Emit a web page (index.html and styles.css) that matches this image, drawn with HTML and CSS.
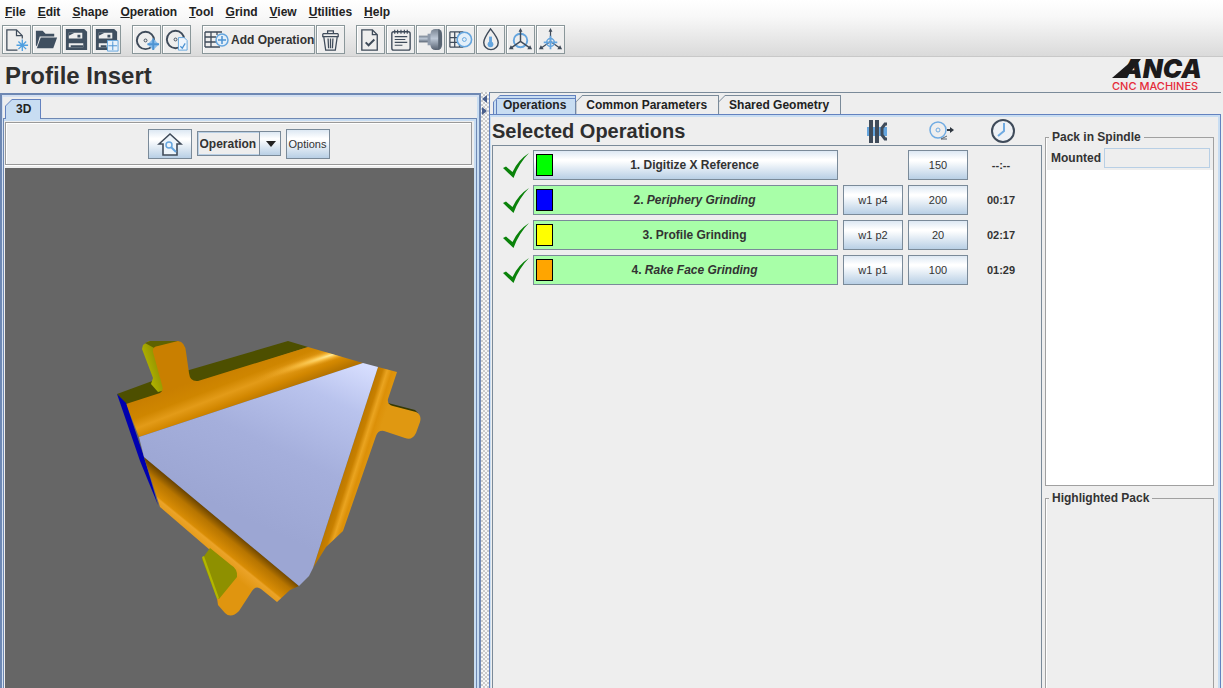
FILE: index.html
```html
<!DOCTYPE html>
<html lang="en">
<head>
<meta charset="utf-8">
<title>Profile Insert</title>
<link rel="stylesheet" href="styles.css">
</head>
<body>
<svg class="defs" width="0" height="0" aria-hidden="true">
  <symbol id="tick" viewBox="0 0 26 27"><path d="M0 16L3 14.500L9.500 20Q15 8 26 1Q16 11 10.500 26Z" fill="#0a820a"/></symbol>
</svg>

<header class="top">
  <nav class="menu">
    <a href="#"><u>F</u>ile</a><a href="#"><u>E</u>dit</a><a href="#"><u>S</u>hape</a><a href="#"><u>O</u>peration</a><a href="#"><u>T</u>ool</a><a href="#"><u>G</u>rind</a><a href="#"><u>V</u>iew</a><a href="#"><u>U</u>tilities</a><a href="#"><u>H</u>elp</a>
  </nav>
  <div class="toolbar">
    <div class="group">
      <button class="tool" aria-label="New"><svg viewBox="0 0 28 28"><path d="M20 13V10L14 4H4V25H15M14 4V10H20" fill="none" stroke="#3f4b5a" stroke-width="1.300"/><path d="M20 14V26M14 20H26M16 16L24 24M24 16L16 24" stroke="#4f9fe0" stroke-width="1.400"/></svg></button>
      <button class="tool" aria-label="Open"><svg viewBox="0 0 28 28"><path d="M3 20V5H10L13 8H22V11H7L4 21Z" fill="#3f4f60"/><path d="M8 12H25L21 23H4Z" fill="#3f4f60"/></svg></button>
      <button class="tool" aria-label="Save"><svg viewBox="0 0 28 28"><path d="M3 3H22L25 6V25H3Z" fill="#3f4f60"/><path d="M6 7H20V13H6ZM6 18H21V22H6Z" fill="#eee"/><path d="M6 7H12L6 10ZM15 9H18V12H15ZM8 20H21V22H8Z" fill="#3f4f60"/></svg></button>
      <button class="tool" aria-label="Save as"><svg viewBox="0 0 28 28"><path d="M3 3H22L25 6V25H3Z" fill="#3f4f60"/><path d="M6 7H20V13H6ZM6 18H16V22H6Z" fill="#eee"/><path d="M6 7H12L6 10ZM15 9H18V12H15ZM8 20H14V22H8Z" fill="#3f4f60"/><path d="M15 15H26V26H15Z" fill="#e8f1fa" stroke="#65a5de"/><path d="M20.500 16V25M16 20.500H25" stroke="#4c93d2"/></svg></button>
    </div>
    <div class="group">
      <button class="tool" aria-label="Add wheel"><svg viewBox="0 0 28 28"><circle cx="13" cy="15" r="9" fill="none" stroke="#3f4b5a" stroke-width="2"/><circle cx="13" cy="15" r="1.500" fill="none" stroke="#3f4b5a"/><path d="M21 13L24 16L27 19L24 22L21 25L18 22L15 19L18 16Z" fill="#8bbdea"/><path d="M21 13V25M15 19H27" stroke="#4f94d3" stroke-width="2"/></svg></button>
      <button class="tool" aria-label="Wheel file"><svg viewBox="0 0 28 28"><circle cx="13" cy="14" r="9" fill="none" stroke="#3f4b5a" stroke-width="2"/><circle cx="13" cy="14" r="1.500" fill="none" stroke="#3f4b5a"/><path d="M16 12H22L25 15V25H16Z" fill="#eef5fc" stroke="#65a5de"/><path d="M18 21L20 23L23 18" fill="none" stroke="#4c93d2" stroke-width="1.300"/></svg></button>
    </div>
    <div class="group">
      <button class="tool wide"><svg class="wide-icon" viewBox="0 0 26 20"><path d="M2 2H19M2 7H13M2 12H13M2 17H17M2 2V17M8 2V17M14 2V5" fill="none" stroke="#3f4b5a" stroke-width="1.300"/><circle cx="19" cy="10" r="6" fill="#e3eff9" stroke="#65a5de" stroke-width="1.500"/><path d="M19 6V14M15 10H23" stroke="#4c93d2" stroke-width="1.500"/></svg>Add Operation</button>
      <button class="tool" aria-label="Delete"><svg viewBox="0 0 28 28"><path d="M6 8H22M11 8V5H17V8M7 11H21L19 25H9ZM6 8V11H22V8M11.500 13L12 23M16.500 13L16 23M14 13V23" fill="none" stroke="#3f4b5a" stroke-width="1.300"/></svg></button>
    </div>
    <div class="group">
      <button class="tool" aria-label="Check"><svg viewBox="0 0 28 28"><path d="M5 4H16L21 9V25H5ZM16 4V9H21" fill="none" stroke="#3f4b5a" stroke-width="1.400"/><path d="M9 17L12 20L18 14" fill="none" stroke="#3f4b5a" stroke-width="2"/></svg></button>
      <button class="tool" aria-label="Notes"><svg viewBox="0 0 28 28"><rect x="5" y="6" width="19" height="19" rx="2" fill="none" stroke="#3f4b5a" stroke-width="1.400"/><path d="M8 4V8M11 4V8M14.500 4V8M18 4V8M21 4V8M8 11H21M8 14H19M8 17H21M8 20H16" stroke="#3f4b5a" stroke-width="1.200"/></svg></button>
      <button class="tool" aria-label="Wheel pack"><svg viewBox="0 0 28 28"><defs><linearGradient id="metal" x1="0" y1="0" x2="0" y2="1"><stop offset="0" stop-color="#788391"/><stop offset=".45" stop-color="#bdc8d6"/><stop offset="1" stop-color="#566170"/></linearGradient></defs><path d="M2 10H13V17H2Z" fill="url(#metal)"/><path d="M11 8H16V20H11Z" fill="#8e9aab"/><rect x="14" y="3" width="12" height="22" rx="5" fill="url(#metal)"/><path d="M22 3Q26 4 26 10V19Q25 24 22 25Z" fill="#596573"/></svg></button>
      <button class="tool" aria-label="Wheel grid"><svg viewBox="0 0 28 28"><path d="M3 6H17M3 12H11M3 17H11M3 22H17M3 6V22M8 6V22M13 6V22" fill="none" stroke="#3f4b5a" stroke-width="1.300"/><circle cx="18" cy="14" r="7.500" fill="#e3eff9" stroke="#65a5de" stroke-width="1.700"/><circle cx="18" cy="14" r="2" fill="none" stroke="#65a5de"/></svg></button>
      <button class="tool" aria-label="Coolant"><svg viewBox="0 0 28 28"><path d="M14 3Q7 13 7 17A7.500 7.500 0 0 0 22 17Q22 13 14 3Z" fill="none" stroke="#3f4b5a" stroke-width="1.500"/><path d="M14 11V19" stroke="#65a5de" stroke-width="3"/><circle cx="14" cy="19" r="3" fill="#65a5de"/></svg></button>
      <button class="tool" aria-label="Rotate axes"><svg viewBox="0 0 28 28"><circle cx="14" cy="15" r="7" fill="none" stroke="#65a5de" stroke-width="2"/><path d="M14 5V16L4 23M14 16L24 23" fill="none" stroke="#3f4b5a" stroke-width="1.500"/><path d="M14 2L16 6H12ZM2 24L4 20L7 24ZM26 24L24 20L21 24Z" fill="#3f4b5a"/></svg></button>
      <button class="tool" aria-label="Move axes"><svg viewBox="0 0 28 28"><path d="M14 5V16L4 23M14 16L24 23" fill="none" stroke="#3f4b5a" stroke-width="1.300"/><path d="M14 2L16 6H12ZM2 24L4 20L7 24ZM26 24L24 20L21 24Z" fill="#3f4b5a"/><circle cx="14" cy="17" r="4" fill="none" stroke="#65a5de" stroke-width="1.500"/><path d="M14 10V24M7 17H21" stroke="#65a5de" stroke-width="1.800"/></svg></button>
    </div>
  </div>
</header>

<div class="titlebar">
  <h1>Profile Insert</h1>
  <svg class="logo" viewBox="0 0 92 34" role="img" aria-label="ANCA CNC Machines">
    <path d="M0 21L22 2H29L14 21Z" fill="#1c1a1b"/>
    <text class="logo-name" x="10" y="21">ANCA</text>
    <text class="logo-sub" x="0" y="33">CNC MACHINES</text>
  </svg>
</div>

<main class="main">
  <section class="view">
    <div class="tabs view-tabs"><button class="tab on view-tab"><span>3D</span></button></div>
    <div class="view-body">
      <div class="view-tools">
        <button class="metal home" aria-label="Home view"><svg viewBox="0 0 26 26"><path d="M2 13L13 3L24 13H20V24H6V13Z" fill="#eef5fb" stroke="#3f4b5a" stroke-width="1.600"/><circle cx="12" cy="14" r="3" fill="none" stroke="#65a5de" stroke-width="1.500"/><path d="M14 16L19 21" stroke="#65a5de" stroke-width="2"/></svg></button>
        <span class="combo"><select aria-label="Colour by"><option>Operation</option></select></span>
        <button class="metal options">Options</button>
      </div>
      <div class="canvas">
        <svg viewBox="5 168 469 520" preserveAspectRatio="xMinYMin meet" role="img" aria-label="3D model of the insert">
          <defs>
            <linearGradient id="bandA" gradientUnits="userSpaceOnUse" x1="213" y1="373" x2="228" y2="412"><stop offset="0" stop-color="#c97f00"/><stop offset=".35" stop-color="#cf8600"/><stop offset=".58" stop-color="#e39b18"/><stop offset=".8" stop-color="#d28700"/><stop offset="1" stop-color="#b67400"/></linearGradient>
            <linearGradient id="bandB" gradientUnits="userSpaceOnUse" x1="345" y1="465" x2="367" y2="472"><stop offset="0" stop-color="#b87600"/><stop offset=".3" stop-color="#c88000"/><stop offset=".5" stop-color="#eaa420"/><stop offset=".7" stop-color="#dc9008"/><stop offset="1" stop-color="#e09811"/></linearGradient>
            <linearGradient id="bandC" gradientUnits="userSpaceOnUse" x1="222" y1="522" x2="200" y2="549"><stop offset="0" stop-color="#6e4600"/><stop offset=".25" stop-color="#b77500"/><stop offset=".6" stop-color="#d98d05"/><stop offset=".65" stop-color="#eba328"/><stop offset="1" stop-color="#e0950f"/></linearGradient>
            <linearGradient id="face" gradientUnits="userSpaceOnUse" x1="372" y1="366" x2="290" y2="540"><stop offset="0" stop-color="#d8dfff"/><stop offset=".25" stop-color="#b9c3ed"/><stop offset=".6" stop-color="#a5afdc"/><stop offset="1" stop-color="#9ca6d3"/></linearGradient>
            <linearGradient id="olive" gradientUnits="userSpaceOnUse" x1="143" y1="365" x2="158" y2="360"><stop offset="0" stop-color="#b4b600"/><stop offset="1" stop-color="#929300"/></linearGradient>
            <radialGradient id="shine" gradientUnits="userSpaceOnUse" cx="0" cy="0" r="1" gradientTransform="translate(331 355) rotate(-18) scale(80 6)"><stop offset="0" stop-color="#ffed9a"/><stop offset=".4" stop-color="#ffc94f" stop-opacity=".7"/><stop offset="1" stop-color="#e9a020" stop-opacity="0"/></radialGradient>
          </defs>
          <path d="M117 394L155 380L288 341L308 347L126 406Z" fill="#4d4f00"/>
          <path d="M143 345L149 341L172 342L156 349L165 390L158 392L151 384L153 378L142 349Z" fill="url(#olive)"/>
          <path d="M145 343L150 341L180 341L156 349Z" fill="#5f6200"/>
          <path d="M126 404L160 393Q164 391 162 385L153 352Q152 347 158 346L178 341Q185 342 186 352L189 373Q190 382 198 381L308 347L363 363L139 437Z" fill="url(#bandA)"/>
          <path d="M190 391L308 347L363 363L190 419Z" fill="url(#shine)"/>
          <path d="M117 394L126 403L144 457L158 505L140 461Z" fill="#0000b0"/>
          <path d="M388 403L415 410L418 413L389 407Z" fill="#363900"/>
          <path d="M378 367L397 372L388 399Q387 405 393 406L416 412Q422 415 420 422L416 433Q412 441 405 438L384 431Q378 430 376 436L343 531L326 547L313 568Z" fill="url(#bandB)"/>
          <path d="M144 457L299 586L290 590L277 602L261 589Q256 585 252 591L239 611Q231 619 225 613L218 605L217 598L234 579L210 550L160 507Z" fill="url(#bandC)"/>
          <path d="M210 548L231 565Q238 569 237 577L219 599L216 596L202 559Z" fill="#8e9000"/>
          <path d="M202 557L204 556L219 598L217 599Z" fill="#b2b600"/>
          <path d="M139 437L363 363L378 367L313 568L309 576L299 586L144 457Z" fill="url(#face)"/>
        </svg>
      </div>
    </div>
  </section>

  <div class="splitter"><i class="arrow left"></i><i class="arrow right"></i></div>

  <section class="work">
    <div class="tabs">
      <button class="tab on"><span>Operations</span></button><button class="tab"><span>Common Parameters</span></button><button class="tab"><span>Shared Geometry</span></button>
    </div>
    <div class="work-body">
      <div class="ops">
        <div class="ops-head row">
          <h2>Selected Operations</h2>
          <svg class="head-icon" viewBox="0 0 24 24"><path d="M2 8H22V17H2Z" fill="#65a5de"/><path d="M4 1H8V24H4ZM10 1H14V24H10Z" fill="#3f4b5a"/><path d="M22 5H20L17 9V16L20 20H22" fill="none" stroke="#3f4b5a" stroke-width="3"/></svg>
          <svg class="head-icon" viewBox="0 0 24 24"><circle cx="8" cy="11" r="8" fill="none" stroke="#70abe2" stroke-width="1.500"/><circle cx="8" cy="11" r="2" fill="none" stroke="#70abe2"/><path d="M17 11H21" stroke="#2f3740" stroke-width="2"/><path d="M20 8L24 11L20 14Z" fill="#2f3740"/><path d="M17 17L11 20H17" fill="none" stroke="#59636e"/></svg>
          <svg class="head-icon clock" viewBox="0 0 24 24"><circle cx="12" cy="12" r="11" fill="#eef1f5" stroke="#3f4b5a" stroke-width="2"/><path d="M13 4V12L7 17" fill="none" stroke="#70abe2" stroke-width="2"/></svg>
        </div>
        <div class="ops-list">
          <div class="row">
            <svg class="tick"><use href="#tick"/></svg>
            <button class="metal op"><i class="chip lime"></i>1. Digitize X Reference</button>
            <span></span><button class="metal">150</button><span class="time">--:--</span>
          </div>
          <div class="row">
            <svg class="tick"><use href="#tick"/></svg>
            <button class="metal op done"><i class="chip blue"></i>2. <em>Periphery Grinding</em></button>
            <button class="metal">w1 p4</button><button class="metal">200</button><span class="time">00:17</span>
          </div>
          <div class="row">
            <svg class="tick"><use href="#tick"/></svg>
            <button class="metal op done"><i class="chip yellow"></i>3. Profile Grinding</button>
            <button class="metal">w1 p2</button><button class="metal">20</button><span class="time">02:17</span>
          </div>
          <div class="row">
            <svg class="tick"><use href="#tick"/></svg>
            <button class="metal op done"><i class="chip orange"></i>4. <em>Rake Face Grinding</em></button>
            <button class="metal">w1 p1</button><button class="metal">100</button><span class="time">01:29</span>
          </div>
        </div>
      </div>
      <aside class="packs">
        <fieldset class="pack spindle">
          <legend>Pack in Spindle</legend>
          <div class="mounted"><label for="mounted">Mounted</label><input id="mounted" type="text" readonly></div>
          <div class="pack-view"></div>
        </fieldset>
        <fieldset class="pack highlighted"><legend>Highlighted Pack</legend></fieldset>
      </aside>
    </div>
  </section>
</main>
</body>
</html>
```

FILE: styles.css
```css
* { box-sizing: border-box; }

body {
  margin: 0;
  height: 100vh;
  display: flex;
  flex-direction: column;
  overflow: hidden;
  background: #eee;
  color: #333;
  font: bold 12px/16px "Liberation Sans", Arial, sans-serif;
}

button, input, select { font: inherit; color: inherit; margin: 0; padding: 0; }
h1, h2 { margin: 0; color: #2e2e2e; }
.defs { position: absolute; }

.top {
  flex: none;
  background: linear-gradient(#fff, #f8f8f8 30%, #dadada);
  border-bottom: 1px solid #c8c8c8;
}
.menu { display: flex; gap: 12px; height: 24px; padding: 4px 6px 0 5px; }
.menu a { color: #222; text-decoration: none; }
.toolbar { display: flex; gap: 11px; padding: 1px 2px 2px; height: 32px; }
.group { display: flex; gap: 1px; }
.tool {
  display: flex;
  align-items: center;
  justify-content: center;
  width: 29px;
  height: 29px;
  border: 1px solid #8a979a;
  background: #eee;
  box-shadow: inset 1px 1px #fff;
}
.tool svg { width: 27px; height: 27px; flex: none; }
.wide { width: auto; padding: 0; gap: 2px; }
.tool .wide-icon { width: 26px; height: 20px; }

.titlebar {
  flex: none;
  display: flex;
  justify-content: space-between;
  height: 35px;
  padding: 0 19px 0 5px;
}
h1 { font-size: 24px; line-height: 37px; }
.logo { width: 92px; height: 34px; overflow: visible; }
.logo-name { font: italic 900 26px Inter, sans-serif; fill: #1c1a1b; }
.logo-sub { font: 500 11px Inter, sans-serif; fill: #e52b3a; }

.main {
  flex: 1;
  min-height: 0;
  display: grid;
  grid-template-columns: 481fr 8px 732fr;
  padding-right: 2px;
}

/* Tabs with a cut top-left corner */
.tabs { display: flex; height: 19px; padding-left: 4px; }
.tab {
  position: relative;
  height: 19px;
  padding: 0 10px;
  border: 0;
  background: #7a8a99;
  clip-path: polygon(7px 0, 100% 0, 100% 100%, 0 100%, 0 7px);
  color: #222;
}
.tab + .tab { margin-left: -1px; padding: 0 12px 0 11px; }
.tab::before {
  content: "";
  position: absolute;
  inset: 1px 1px 0;
  background: #eee;
  clip-path: polygon(6px 0, 100% 0, 100% 100%, 0 100%, 0 6px);
}
.tab.on { background: #6382bf; }
.tab.on::before { background: #c8ddf2; }
.tab span { position: relative; }

.view {
  display: flex;
  flex-direction: column;
  margin-top: 1px;
  min-width: 0;
  border-top: 2px solid #6e88b3;
  border-left: 2px solid #6e88b3;
  border-right: 2px solid #6e88b3;
  box-shadow: inset 0 2px #d3e0f2, inset 1px 0 #d3e0f2, inset -2px 0 #c8ddf2;
}
.view-tabs { margin-top: 4px; height: 19px; padding-left: 3px; }
.view-tab { height: 20px; padding: 0 10px 0 11px; }
.view-body {
  flex: 1;
  min-height: 0;
  display: flex;
  flex-direction: column;
  margin: 0 2px 0 1px;
  border: 1px solid #6e88b3;
  border-bottom: 0;
  box-shadow: inset 0 2px #c8ddf2, inset -2px 0 #c8ddf2;
  padding: 3px 2px 0 1px;
}
.view-tools {
  display: flex;
  align-items: center;
  justify-content: center;
  gap: 5px;
  height: 43px;
  margin: 0 2px 3px 0;
  border: 1px solid #999;
  box-shadow: inset 1px 1px #fff, 0 1px #fff;
}
.canvas { flex: 1; min-height: 0; background: #666; }
.canvas svg { display: block; width: 100%; height: 100%; }

.metal {
  height: 30px;
  border: 1px solid #7a8a99;
  background: linear-gradient(#dde8f3, #fff 30%, #fff 35%, #b8cfe5);
  font-weight: normal;
  font-size: 11px;
}
.home { width: 44px; display: grid; place-items: center; }
.home svg { width: 26px; height: 26px; }
.options { width: 44px; }
.combo { position: relative; display: flex; width: 84px; height: 25px; }
.combo select {
  appearance: none;
  width: 100%;
  padding-left: 2px;
  border: 1px solid #7a8a99;
  border-radius: 0;
  box-shadow: inset 0 0 0 1px #b8cfe5;
  background: #eee;
}
.combo::before {
  content: "";
  position: absolute;
  inset: 0 0 0 auto;
  width: 20px;
  border: 1px solid #7a8a99;
  background: linear-gradient(#dde8f3, #fff 30%, #b8cfe5);
  pointer-events: none;
}
.combo::after {
  content: "";
  position: absolute;
  right: 5px;
  top: 10px;
  border: 5px solid transparent;
  border-top: 6px solid #222;
  border-bottom: 0;
  pointer-events: none;
}

.splitter {
  display: flex;
  flex-direction: column;
  gap: 4px;
  padding: 3px 1px;
  background: radial-gradient(circle at 1px 1px, #aaa 0 0.5px, transparent 1px) 0 0 / 4px 4px,
              radial-gradient(circle at 3px 3px, #aaa 0 0.5px, transparent 1px) 0 0 / 4px 4px, #f8f8f8;
}
.arrow { border: 4px solid transparent; width: 0; height: 0; }
.arrow.left { border-left: 0; border-right: 5px solid #4a5f8c; }
.arrow.right { border-right: 0; border-left: 5px solid #4a5f8c; }

.work {
  display: flex;
  flex-direction: column;
  min-width: 0;
  border-top: 1px solid #7a8a99;
  border-left: 1px solid #6382bf;
  padding-top: 2px;
}
.work .tabs { padding-left: 3px; }
.work .tab.on::before { box-shadow: inset 2px 2px #c8ddf2, inset 3px 3px #6382bf; }
.work-body {
  flex: 1;
  min-height: 0;
  display: flex;
  gap: 3px;
  border-top: 1px solid #6382bf;
  border-right: 1px solid #6382bf;
  box-shadow: inset 1px 2px #c8ddf2, inset -2px 0 #c8ddf2;
  padding: 2px 6px 0 2px;
}
.ops { flex: 1; min-width: 0; display: flex; flex-direction: column; }
.row {
  display: grid;
  grid-template-columns: 25px 1fr 60px 60px 56px;
  column-gap: 5px;
  align-items: center;
  padding: 0 12px 0 10px;
}
.ops-head { height: 28px; padding-left: 0; }
.ops-head h2 { grid-column: 1 / 3; font-size: 20px; line-height: 28px; }
.head-icon { width: 24px; height: 24px; margin-left: 21px; overflow: visible; }
.clock { margin-left: 17px; }
.ops-list {
  flex: 1;
  display: flex;
  flex-direction: column;
  gap: 5px;
  padding-top: 4px;
  border: 1px solid #7a8a99;
  border-bottom: 0;
}
.tick { width: 26px; height: 27px; }
.op { position: relative; font-weight: bold; font-size: 12px; padding-left: 18px; }
.done { background: #a8ffa8; }
.chip {
  position: absolute;
  left: 2px;
  top: 3px;
  width: 17px;
  height: 22px;
  border: 1px solid #000;
}
.lime { background: #0f0; }
.blue { background: #00f; }
.yellow { background: #ff0; }
.orange { background: #ffa500; }
.time { font-size: 11px; text-align: center; }

.packs { flex: none; width: 169px; display: flex; flex-direction: column; padding-top: 12px; gap: 4px; }
.pack {
  min-width: 0;
  margin: 0;
  padding: 0;
  border: 1px solid #a0a0a0;
  box-shadow: inset 1px 0 #fff;
}
.pack legend { margin-left: 3px; padding: 0 3px; }
.spindle {
  flex: 0 0 357px;
  display: grid;
  grid-template: auto minmax(0, 1fr) / minmax(0, 1fr);
}
.highlighted { flex: 1; border-bottom: 0; }
.mounted { display: flex; align-items: center; gap: 3px; padding: 3px 3px 2px 5px; }
.mounted input {
  flex: 1;
  min-width: 0;
  height: 20px;
  border: 1px solid #b8cfe5;
  background: #eee;
}
.pack-view { background: #fff; }
```
